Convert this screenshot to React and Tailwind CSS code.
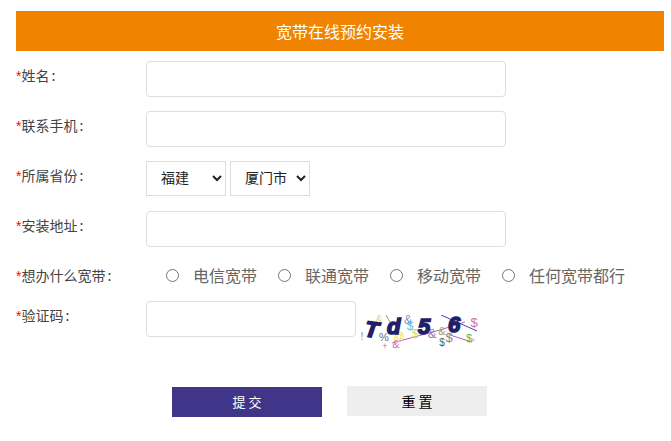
import React from "react";

const font = { fontFamily: '"Noto Sans CJK SC", sans-serif' };

const Label = ({ children }) => (
  <label className="w-[130px] shrink-0 text-sm leading-[28px] text-[#444]">
    <span className="font-['Liberation_Sans'] text-[#f00]">*</span>
    {children}
    <span className="ml-0.5">:</span>
  </label>
);

const TextInput = ({ className }) => (
  <input
    type="text"
    className={`h-9 rounded border border-[#ddd] bg-white outline-none ${className}`}
  />
);

const noise = [
  ["&", 18, 8, "#e3d27a", 10],
  ["%", 23, 26, "#66707a", 11],
  ["!", 1, 25, "#9a9a5a", 11],
  ["@", 38, 25, "#e6e060", 11],
  ["&", 35, 33, "#e86aa0", 11],
  ["+", 24, 34, "#d060d0", 9],
  ["&", 47, 9, "#7a90d0", 12],
  ["$", 49, 15, "#70b8e8", 12],
  ["$", 54, 23, "#c8e070", 12],
  ["&", 71, 23, "#a070b8", 13],
  ["&", 81, 20, "#a0a070", 11],
  ["$", 88, 27, "#7a8a9a", 13],
  ["$", 81, 31, "#506a50", 10],
  ["$", 113, 12, "#d070a8", 13],
  ["$", 108, 27, "#5ab05a", 11],
  ["*", 112, 31, "#c0c0c0", 10],
];

const Captcha = () => (
  <svg width="118" height="36" viewBox="0 0 118 36" className="ml-[5px] mt-[14px] shrink-0">
    {/* noise lines */}
    <path d="M31 28 L79 15 L104 7" fill="none" stroke="#9a3fa8" strokeWidth="0.8" />
    <path d="M89 20 L111 27" fill="none" stroke="#9a3fa8" strokeWidth="0.8" />
    <path d="M80 0 L116 16" fill="none" stroke="#14148c" strokeWidth="0.8" />
    <path d="M25 0 L30 9" stroke="#7aa86a" strokeWidth="1" />
    {/* noise chars */}
    <g fontFamily="Liberation Sans, sans-serif" textAnchor="middle">
      {noise.map(([ch, x, y, color, size], i) => (
        <text key={i} x={x} y={y} fill={color} fontSize={size}>
          {ch}
        </text>
      ))}
    </g>
    {/* code */}
    <g
      fill="#20206a"
      stroke="#20206a"
      strokeWidth="1.6"
      fontFamily="Liberation Sans, sans-serif"
      fontWeight="700"
      fontStyle="italic"
      fontSize="22"
    >
      <text x="4" y="22" transform="rotate(8 10 15)">T</text>
      <text x="26" y="19">d</text>
      <text x="57" y="19">5</text>
      <text x="87" y="17">6</text>
    </g>
  </svg>
);

const carriers = ["电信宽带", "联通宽带", "移动宽带", "任何宽带都行"];

export default function App() {
  return (
    <div className="min-h-[441px] bg-white px-4 pt-[11px]" style={font}>
      <div className="w-[648px]">
        <div className="flex h-10 items-center justify-center bg-[#f08300] text-base text-white">
          宽带在线预约安装
        </div>

        <div className="mt-2.5 flex h-[50px]">
          <Label>姓名</Label>
          <TextInput className="w-[360px]" />
        </div>
        <div className="flex h-[50px]">
          <Label>联系手机</Label>
          <TextInput className="w-[360px]" />
        </div>
        <div className="flex h-[50px]">
          <Label>所属省份</Label>
          <div className="flex gap-1">
            <select className="h-[35px] w-20 border border-[#ddd] bg-white pb-1 pl-2.5 text-sm text-[#222] outline-none">
              <option>福建</option>
            </select>
            <select className="h-[35px] w-20 border border-[#ddd] bg-white pb-1 pl-2.5 text-sm text-[#222] outline-none">
              <option>厦门市</option>
            </select>
          </div>
        </div>
        <div className="flex h-[50px]">
          <Label>安装地址</Label>
          <TextInput className="w-[360px]" />
        </div>

        <div className="flex h-10">
          <Label>想办什么宽带</Label>
          <div className="flex h-[28px] items-center pl-5">
            {carriers.map((name) => (
              <label key={name} className="flex w-28 items-center text-base whitespace-nowrap text-[#666]">
                <input type="radio" name="carrier" className="m-0 mr-[14px] h-[13px] w-[13px] shrink-0" />
                {name}
              </label>
            ))}
          </div>
        </div>

        <div className="flex">
          <Label>验证码</Label>
          <TextInput className="w-[210px]" />
          <Captcha />
        </div>

        <div className="mt-[35px] flex items-start pl-[156px]">
          <button className="mt-px h-[30px] w-[150px] bg-[#41358a] text-[13px] text-white">提 交</button>
          <button className="ml-[25px] h-[30px] w-[140px] bg-[#eee] text-sm text-black">重 置</button>
        </div>
      </div>
    </div>
  );
}
